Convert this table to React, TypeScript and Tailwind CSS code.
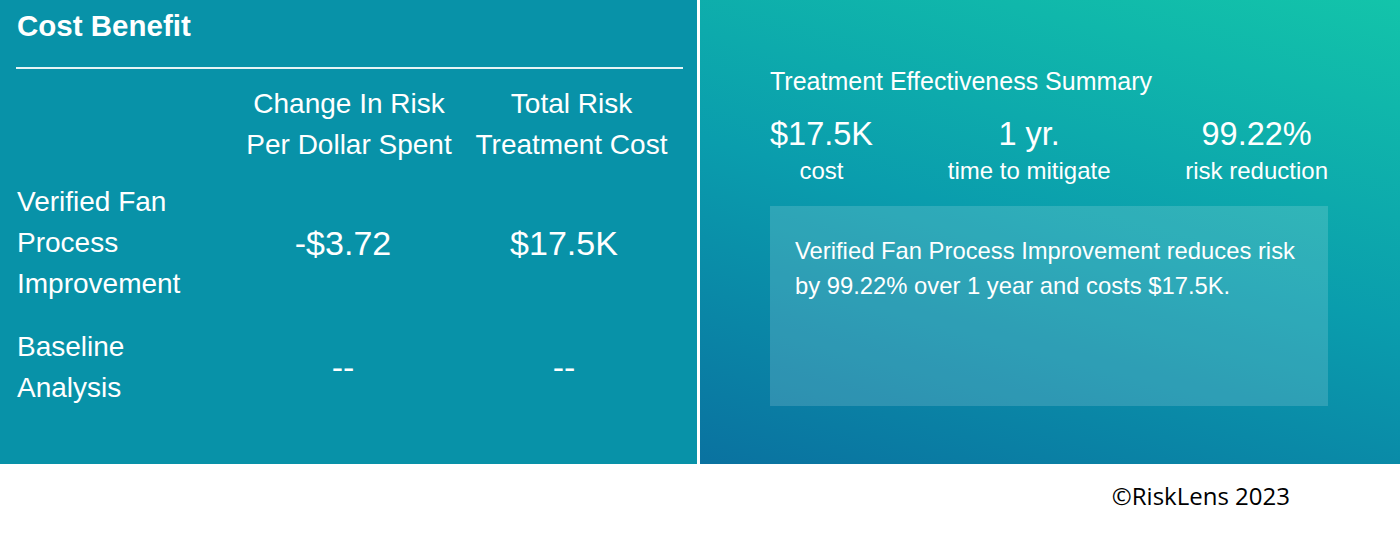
const stats = [
  { value: "$17.5K", label: "cost" },
  { value: "1 yr.", label: "time to mitigate" },
  { value: "99.22%", label: "risk reduction" },
];

const rows = [
  { label: ["Verified Fan", "Process", "Improvement"], change: "-$3.72", cost: "$17.5K" },
  { label: ["Baseline", "Analysis"], change: "--", cost: "--" },
];

export default function App() {
  return (
    <div className="h-[535px] w-[1400px] bg-white font-['Liberation_Sans',Arial,sans-serif] text-white">
      <div className="flex h-[464px] gap-[3px]">
        {/* cost benefit table */}
        <section className="w-[697px] bg-[#0892a8]">
          <h2 className="px-[17px] pt-[9px] text-[29.5px] font-bold leading-[34px]">Cost Benefit</h2>
          <div className="ml-[16px] mt-[24px] h-[2px] w-[667px] bg-white/90" />
          <div className="mt-[14px] grid grid-cols-[218px_222px_222px] pl-[20px] text-[28px] leading-[41px]">
            <div />
            <div className="text-center whitespace-nowrap">
              Change In Risk
              <br />
              Per Dollar Spent
            </div>
            <div className="pl-[1px] text-center whitespace-nowrap">
              Total Risk
              <br />
              Treatment Cost
            </div>
          </div>
          <div className="mt-[16px] flex flex-col gap-[22px] pl-[17px]">
            {rows.map((row) => (
              <div key={row.change + row.label[0]} className="grid grid-cols-[218px_222px_222px] items-center">
                <div className="text-[28px] leading-[41px]">
                  {row.label.map((l) => (
                    <div key={l}>{l}</div>
                  ))}
                </div>
                <div className="pr-[6px] text-center text-[34px] leading-[38px]">{row.change}</div>
                <div className="pr-[8px] text-center text-[34px] leading-[38px]">{row.cost}</div>
              </div>
            ))}
          </div>
        </section>

        {/* effectiveness summary */}
        <section className="flex-1 bg-linear-[15deg] from-[#0a72a0] via-[#0a9dad] to-[#13c4aa] pl-[70px] pr-[72px] pt-[67px]">
          <h3 className="text-[25px] leading-[28px]">Treatment Effectiveness Summary</h3>
          <div className="mt-[21px] flex justify-between">
            {stats.map((s) => (
              <div key={s.label} className="flex flex-col items-center">
                <span className="text-[32.5px] leading-[37px]">{s.value}</span>
                <span className="mt-[4px] text-[24px] leading-[27px]">{s.label}</span>
              </div>
            ))}
          </div>
          <div className="mt-[22px] h-[200px] bg-white/15 px-[25px] pt-[27px] text-[23.8px] leading-[35px]">
            Verified Fan Process Improvement reduces risk by 99.22% over 1 year and costs $17.5K.
          </div>
        </section>
      </div>
      <div className="flex justify-end pr-[110px] pt-[14px] font-['Open_Sans',sans-serif] text-[24px] text-black">
        ©RiskLens 2023
      </div>
    </div>
  );
}
